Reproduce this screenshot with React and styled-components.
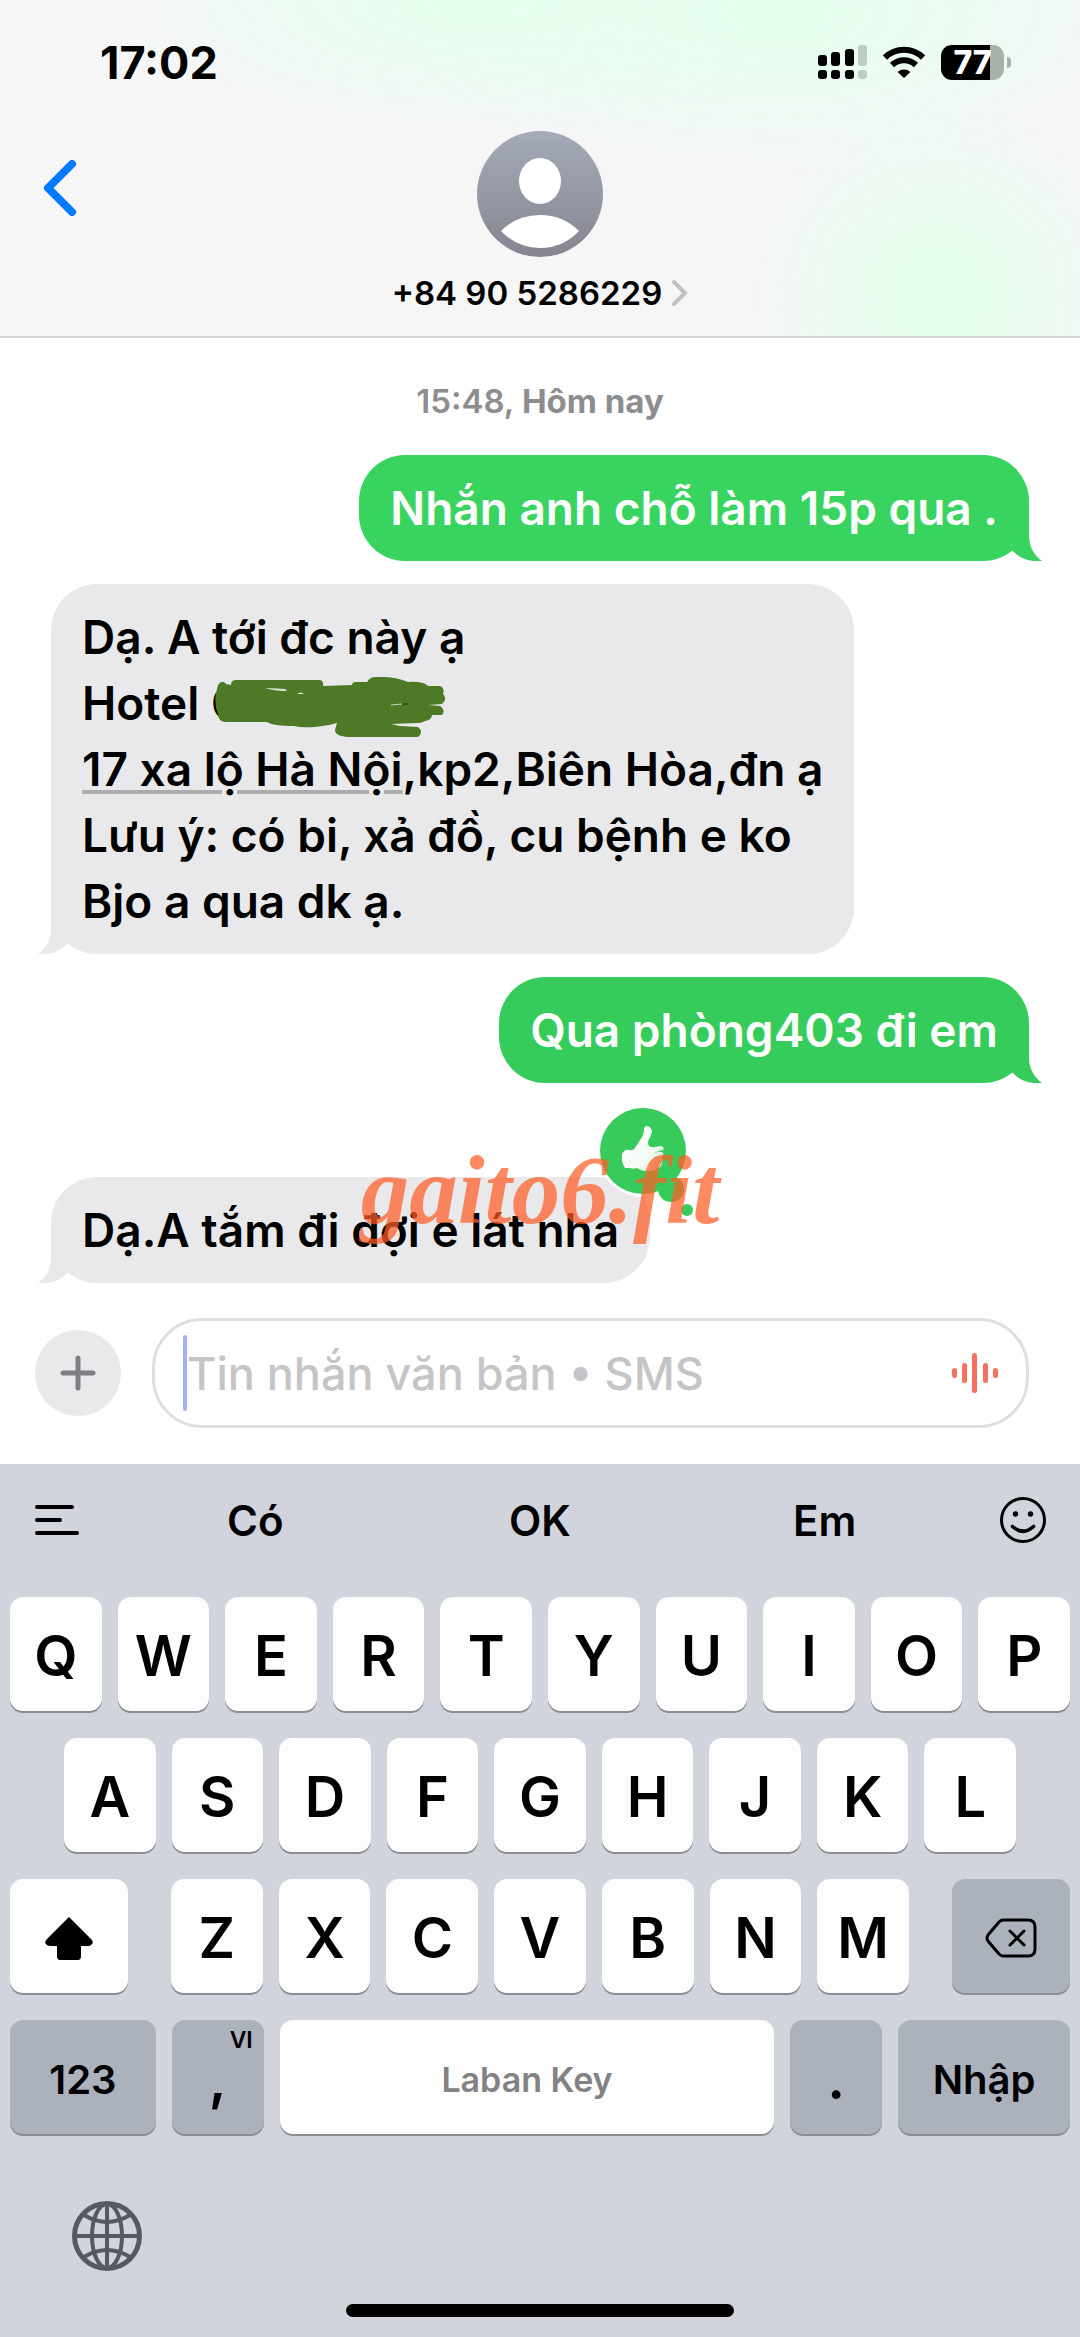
import { styled, createGlobalStyle, css } from 'styled-components';

const TOP_ROW = ['Q', 'W', 'E', 'R', 'T', 'Y', 'U', 'I', 'O', 'P'];
const HOME_ROW = ['A', 'S', 'D', 'F', 'G', 'H', 'J', 'K', 'L'];
const BOTTOM_ROW = ['Z', 'X', 'C', 'V', 'B', 'N', 'M'];
const SUGGESTIONS = ['Có', 'OK', 'Em'];

const SignalIcon = () => (
  <svg width='49' height='34' viewBox='0 0 49 34' aria-hidden='true'>
    <rect x='0' y='10' width='9' height='11' rx='3' />
    <rect x='13' y='7' width='9' height='14' rx='3' />
    <rect x='27' y='4' width='9' height='17' rx='3' />
    <rect x='0' y='25' width='9' height='9' rx='3' />
    <rect x='13' y='25' width='9' height='9' rx='3' />
    <rect x='27' y='25' width='9' height='9' rx='3' />
    <g fill='#bccdc3'>
      <rect x='40' y='0' width='9' height='21' rx='3' />
      <rect x='40' y='25' width='9' height='9' rx='3' />
    </g>
  </svg>
);

const WifiIcon = () => (
  <svg width='42' height='34' viewBox='0 0 42 34' aria-hidden='true'>
    <g fill='none' stroke='#000' strokeWidth='6'>
      <path d='M2 12.5 A27 27 0 0 1 40 12.5' />
      <path d='M9 20 A17.5 17.5 0 0 1 33 20' />
    </g>
    <path d='M21 33 L14.6 27 A9.5 9.5 0 0 1 27.4 27 Z' />
  </svg>
);

const Tail = () => (
  <TailSvg width='44' height='50' viewBox='0 0 44 50' aria-hidden='true'>
    <path d='M31 0 V24 C31 36 36 44 44 50 C32 51 22 48 15 40 L0 30 V0 Z' />
  </TailSvg>
);

const Scribble = () => (
  <ScribbleSvg width='236' height='61' viewBox='0 0 236 61' aria-hidden='true'>
    <path
      fill='#4e7a28'
      d='M5 16 L7 8 Q11 2 15 7 L20 8 Q20 3 25 3 H74 L109 3 Q113 4 112 9 L141 8 Q141 5 145 5 L156 5 Q159 0 164 0 Q182 -1 197 5 Q212 4 217 9 L229 9 Q234 11 232 17 Q237 22 231 27 L217 28 L229 29 Q235 33 231 38 L221 38 Q221 43 214 44 Q211 46 207 46 L180 47 L189 49 L207 50 Q213 55 207 60 H140 Q124 60 124 53 L126 46 L118 48 Q95 52 83 49 Q62 49 56 45 H14 Q7 44 7 37 Q3 28 5 16 Z'
    />
    <path fill='#e3e8dd' d='M54 11 L74 12 L76 14 Q63 14 54 11 Z M86 17 Q90 14 93 17 Z' />
    <path stroke='#c9d3bf' d='M180 28 L191 27' />
    <path stroke='#1a2a0c' d='M191 27 L197 27' />
  </ScribbleSvg>
);

const ThumbReaction = () => (
  <ReactionSvg width='100' height='112' viewBox='-4 -4 100 112' role='img' aria-label='Thích'>
    <defs>
      <linearGradient id='thumbFill' x1='0' y1='0' x2='1' y2='1'>
        <stop offset='0' stopColor='#ffffff' />
        <stop offset='0.65' stopColor='#f3fbf4' />
        <stop offset='1' stopColor='#bfe6c6' />
      </linearGradient>
    </defs>
    <circle cx='43' cy='43' r='46' fill='#fff' />
    <g fill='#36cb5b'>
      <circle cx='43' cy='43' r='43' />
      <circle cx='71' cy='81' r='13' />
      <circle cx='87' cy='102' r='6' />
    </g>
    <path
      fill='url(#thumbFill)'
      d='M46 18 Q51 18 52 23 Q51 28 49 31 Q47 35 49 38 Q52 40 55 39 L61 38 Q65 39 63 42 L57 44 L62 44 Q65 46 62 49 Q64 52 62 54 Q62 58 59 60 Q53 64 47 63 Q41 63 37 60 Q32 61 30 60 L25 60 Q21 54 22 46 Q25 41 29 42 Q33 43 35 40 L42 29 Q44 26 44 20 Z'
    />
    <path fill='none' stroke='#9ad6a6' d='M55 45 L61 42 M54 50 L62 48 M54 55 L61 53' />
  </ReactionSvg>
);

const Key = ({ children, ...rest }) => (
  <KeyButton type='button' {...rest}>
    {children}
  </KeyButton>
);

const App = () => {
  return (
    <>
      <GlobalStyle />
      <Screen>
        <Header>
          <StatusBar>
            <Clock>17:02</Clock>
            <StatusIcons>
              <SignalIcon />
              <WifiIcon />
              <Battery>
                <BatteryBody>77</BatteryBody>
                <BatteryNub />
              </Battery>
            </StatusIcons>
          </StatusBar>
          <NavBar>
            <BackButton type='button' aria-label='Quay lại'>
              <svg width='34' height='56' viewBox='0 0 34 56' fill='none'>
                <path
                  d='M29 4 L5 28 L29 52'
                  stroke='#007aff'
                  strokeWidth='8'
                  strokeLinecap='round'
                  strokeLinejoin='round'
                />
              </svg>
            </BackButton>
            <Contact type='button'>
              <svg width='126' height='126' viewBox='0 0 126 126' aria-hidden='true'>
                <defs>
                  <linearGradient id='avatarFill' x1='0' y1='0' x2='0' y2='1'>
                    <stop offset='0' stopColor='#a5abb9' />
                    <stop offset='1' stopColor='#858590' />
                  </linearGradient>
                </defs>
                <circle cx='63' cy='63' r='63' fill='url(#avatarFill)' />
                <ellipse cx='63' cy='50' rx='21' ry='23' fill='#fff' />
                <path d='M24 100 Q40 84 63 84 Q86 84 102 100 Q86 117 63 117 Q40 117 24 100 Z' fill='#fff' />
              </svg>
              <ContactName>
                +84 90 5286229
                <svg width='16' height='26' viewBox='0 0 16 26' fill='none' aria-hidden='true'>
                  <path d='M2 2 L13 13 L2 24' stroke='#c1c1c4' strokeWidth='4' strokeLinecap='round' />
                </svg>
              </ContactName>
            </Contact>
          </NavBar>
        </Header>

        <Thread>
          <DateLabel>
            15:48, <strong>Hôm nay</strong>
          </DateLabel>
          <Bubble $sent $color='#39d460'>
            Nhắn anh chỗ làm 15p qua .
            <Tail />
          </Bubble>
          <Bubble>
            Dạ. A tới đc này ạ
            <br />
            Hotel{' '}
            <Redacted>
              C
              <Scribble />
            </Redacted>
            <br />
            <AddressLink href='#map'>17 xa lộ Hà Nội</AddressLink>,kp2,Biên Hòa,đn ạ
            <br />
            Lưu ý: có bi, xả đồ, cu bệnh e ko
            <br />
            Bjo a qua dk ạ.
            <Tail />
          </Bubble>
          <Bubble $sent $color='#36cc5b'>
            Qua phòng403 đi em
            <Tail />
          </Bubble>
          <Bubble $reacted>
            Dạ.A tắm đi đợi e lát nha
            <Tail />
            <ThumbReaction />
          </Bubble>
          <Watermark>gaito6.fit</Watermark>
        </Thread>

        <Composer>
          <PlusButton type='button' aria-label='Thêm'>
            <svg width='36' height='36' viewBox='0 0 36 36' aria-hidden='true'>
              <path d='M18 3 V33 M3 18 H33' stroke='#7d7e81' strokeWidth='5' strokeLinecap='round' />
            </svg>
          </PlusButton>
          <Field>
            <Caret />
            <MessageInput type='text' aria-label='Tin nhắn' placeholder='Tin nhắn văn bản • SMS' />
            <VoiceButton type='button' aria-label='Ghi âm'>
              <svg width='46' height='42' viewBox='0 0 46 42' aria-hidden='true'>
                <g fill='#f5715f'>
                  <rect x='0' y='16' width='5' height='10' rx='2.5' />
                  <rect x='10' y='11' width='5' height='20' rx='2.5' />
                  <rect x='20' y='1' width='5' height='40' rx='2.5' />
                  <rect x='31' y='11' width='5' height='20' rx='2.5' />
                  <rect x='41' y='16' width='5' height='10' rx='2.5' />
                </g>
              </svg>
            </VoiceButton>
          </Field>
        </Composer>

        <Keyboard>
          <SuggestionBar>
            <BarButton type='button' aria-label='Menu'>
              <svg width='44' height='30' viewBox='0 0 44 30' aria-hidden='true'>
                <path
                  d='M2 2 H37 M2 15 H25 M2 28 H42'
                  stroke='#000'
                  strokeWidth='4'
                  strokeLinecap='round'
                />
              </svg>
            </BarButton>
            {SUGGESTIONS.map((word) => (
              <BarButton type='button' key={word}>
                {word}
              </BarButton>
            ))}
            <BarButton type='button' aria-label='Biểu tượng cảm xúc'>
              <svg width='46' height='46' viewBox='0 0 46 46' fill='none' aria-hidden='true'>
                <circle cx='23' cy='23' r='21.5' stroke='#000' strokeWidth='3' />
                <circle cx='15.5' cy='17' r='2.7' fill='#000' />
                <circle cx='30.5' cy='17' r='2.7' fill='#000' />
                <path d='M12.5 29.5 Q23 39 33.5 29.5' stroke='#000' strokeWidth='3.6' strokeLinecap='round' />
              </svg>
            </BarButton>
          </SuggestionBar>

          <Keys>
            <KeyRow>
              {TOP_ROW.map((letter) => (
                <Key key={letter}>{letter}</Key>
              ))}
            </KeyRow>
            <KeyRow $inset>
              {HOME_ROW.map((letter) => (
                <Key key={letter}>{letter}</Key>
              ))}
            </KeyRow>
            <ShiftRow>
              <Key aria-label='Shift'>
                <svg width='48' height='43' viewBox='0 0 48 43' aria-hidden='true'>
                  <path d='M24 0 L46 22 Q49 25 47 27 Q46 29 43 29 H36 V39 Q36 43 33 43 H15 Q12 43 12 39 V29 H5 Q2 29 1 27 Q-1 25 2 22 Z' />
                </svg>
              </Key>
              <KeyRow>
                {BOTTOM_ROW.map((letter) => (
                  <Key key={letter}>{letter}</Key>
                ))}
              </KeyRow>
              <Key $dark aria-label='Xóa'>
                <svg width='52' height='40' viewBox='0 0 52 40' fill='none' stroke='#000' aria-hidden='true'>
                  <path
                    d='M18 2 H43 Q50 2 50 9 V31 Q50 38 43 38 H18 Q16 38 14 36 L3 23 Q1 20 3 17 L14 4 Q16 2 18 2 Z'
                    strokeWidth='3'
                  />
                  <path d='M25 13 L39 27 M39 13 L25 27' strokeWidth='3' strokeLinecap='round' />
                </svg>
              </Key>
            </ShiftRow>
            <SpaceRow>
              <Key $dark $size={40}>
                123
              </Key>
              <Key $dark>
                ,<KeyHint>VI</KeyHint>
              </Key>
              <Key $size={34} $muted>
                Laban Key
              </Key>
              <Key $dark>.</Key>
              <Key $dark $size={40}>
                Nhập
              </Key>
            </SpaceRow>
          </Keys>

          <GlobeButton type='button' aria-label='Đổi bàn phím'>
            <svg width='70' height='70' viewBox='0 0 70 70' fill='none' stroke='#555a61' aria-hidden='true'>
              <circle cx='35' cy='35' r='32.5' strokeWidth='5' />
              <ellipse cx='35' cy='35' rx='15' ry='32' strokeWidth='4' />
              <path d='M35 2 V68 M2 35 H68' strokeWidth='4' />
              <path d='M12 14 Q35 28 58 14 M12 56 Q35 42 58 56' strokeWidth='4' />
            </svg>
          </GlobeButton>
          <HomeIndicator />
        </Keyboard>
      </Screen>
    </>
  );
};

export default App;

const GlobalStyle = createGlobalStyle`
  * {
    box-sizing: border-box;
  }

  body {
    margin: 0;
    background: #fff;
    color: #000;
    font-family: Inter, 'Noto Sans', sans-serif;
    font-weight: 600;
  }

  button {
    margin: 0;
    padding: 0;
    border: none;
    background: none;
    color: inherit;
    font: inherit;
    cursor: pointer;
  }

  svg {
    display: block;
    flex-shrink: 0;
  }
`;

const Screen = styled.div`
  display: flex;
  flex-direction: column;
  min-height: 100vh;
`;

const Header = styled.header`
  border-bottom: 2px solid #d3d5d5;
  background:
    radial-gradient(ellipse 34% 40% at 44% 0%, #e5ffee 10%, rgb(229 255 238 / 0%) 100%),
    radial-gradient(ellipse 36% 48% at 72% 4%, #e5ffee 10%, rgb(229 255 238 / 0%) 100%),
    radial-gradient(ellipse 18% 58% at 87% 88%, #e4ffec 15%, rgb(228 255 236 / 0%) 100%),
    #f6f6f7;
`;

const StatusBar = styled.div`
  display: flex;
  align-items: center;
  justify-content: space-between;
  height: 124px;
  padding: 0 69px 0 100px;
`;

const Clock = styled.time`
  font-size: 45px;
  font-weight: 700;
`;

const StatusIcons = styled.div`
  display: flex;
  align-items: center;
  gap: 16px;
`;

const Battery = styled.div`
  display: flex;
  align-items: center;
  gap: 3px;
`;

const BatteryBody = styled.span`
  width: 63px;
  height: 35px;
  border-radius: 11px;
  background: linear-gradient(to right, #000 77%, #a7b2aa 77%);
  color: #fff;
  font-size: 32px;
  font-weight: 800;
  line-height: 35px;
  text-align: center;
`;

const BatteryNub = styled.span`
  width: 4px;
  height: 11px;
  border-radius: 0 4px 4px 0;
  background: #a7b2aa;
`;

const NavBar = styled.nav`
  display: grid;
  grid-template-columns: 1fr auto 1fr;
  align-items: start;
  padding: 7px 43px 23px;
`;

const BackButton = styled.button`
  display: flex;
  align-items: center;
  justify-self: start;
  height: 114px;
`;

const Contact = styled.button`
  display: flex;
  flex-direction: column;
  align-items: center;
  gap: 16px;
`;

const ContactName = styled.span`
  display: flex;
  align-items: center;
  gap: 10px;
  font-size: 33px;
  line-height: 40px;
`;

const Thread = styled.main`
  position: relative;
  display: flex;
  flex: 1;
  flex-direction: column;
  align-items: flex-start;
  gap: 23px;
  padding: 43px 51px 0;
`;

const DateLabel = styled.p`
  align-self: center;
  margin: 0 0 11px;
  color: #8d8d90;
  font-size: 33px;
  line-height: 40px;

  strong {
    font-weight: 700;
  }
`;

const TailSvg = styled.svg`
  position: absolute;
  right: -13px;
  bottom: 0;
`;

const Bubble = styled.div`
  position: relative;
  padding: 20px 31px;
  border-radius: 46px;
  background: #e9e9eb;
  font-size: 46px;
  line-height: 66px;

  ${TailSvg} {
    right: auto;
    left: -13px;
    fill: #e9e9eb;
    transform: scaleX(-1);
  }

  ${({ $sent, $color }) =>
    $sent &&
    css`
      align-self: flex-end;
      background: ${$color};
      color: #fff;

      ${TailSvg} {
        right: -13px;
        left: auto;
        fill: ${$color};
        transform: none;
      }
    `}

  ${({ $reacted }) => $reacted && 'margin-top: 71px;'}
`;

const Redacted = styled.span`
  position: relative;
  display: inline-block;
`;

const ScribbleSvg = styled.svg`
  position: absolute;
  top: 7px;
  left: 0;
`;

const AddressLink = styled.a`
  color: inherit;
  text-decoration: underline;
  text-decoration-color: #acacae;
  text-decoration-thickness: 4px;
  text-underline-offset: 4px;
`;

const ReactionSvg = styled.svg`
  position: absolute;
  top: -73px;
  right: -46px;
`;

const Watermark = styled.div`
  position: absolute;
  right: 0;
  bottom: 44px;
  left: 0;
  color: rgb(255 92 36 / 72%);
  font-family: 'Liberation Serif', serif;
  font-size: 97px;
  font-style: italic;
  font-weight: 700;
  line-height: 97px;
  text-align: center;
  pointer-events: none;
`;

const Composer = styled.form`
  display: flex;
  align-items: center;
  gap: 31px;
  padding: 35px 51px 36px 35px;
`;

const PlusButton = styled.button`
  display: flex;
  align-items: center;
  justify-content: center;
  width: 86px;
  height: 86px;
  border-radius: 50%;
  background: #e8e9eb;
`;

const Field = styled.div`
  display: flex;
  flex: 1;
  align-items: center;
  height: 110px;
  padding: 0 28px;
  border: 3px solid #dfdfe1;
  border-radius: 50px;
`;

const Caret = styled.span`
  width: 4px;
  height: 76px;
  border-radius: 2px;
  background: #a3b1f7;
`;

const MessageInput = styled.input`
  flex: 1;
  min-width: 0;
  padding: 0;
  border: none;
  outline: none;
  background: none;
  color: #000;
  font: inherit;
  font-size: 45px;
  font-weight: 500;

  &::placeholder {
    color: #c5c5c7;
    opacity: 1;
  }
`;

const VoiceButton = styled.button`
  display: flex;
`;

const Keyboard = styled.section`
  display: flex;
  flex-direction: column;
  padding-bottom: 20px;
  background: #d1d4dc;
`;

const SuggestionBar = styled.div`
  display: grid;
  grid-template-columns: 113px 1fr 1fr 1fr 113px;
  height: 112px;
`;

const BarButton = styled.button`
  display: flex;
  align-items: center;
  justify-content: center;
  font-size: 42px;
`;

const Keys = styled.div`
  display: flex;
  flex-direction: column;
  gap: 27px;
  padding: 21px 10px 0;
`;

const KeyRow = styled.div`
  display: grid;
  grid-auto-columns: minmax(0, 1fr);
  grid-auto-flow: column;
  gap: 16px;
  padding: 0 ${({ $inset }) => ($inset ? '54px' : '0')};
`;

const ShiftRow = styled.div`
  display: grid;
  grid-template-columns: 118fr 738fr 118fr;
  gap: 43px;
`;

const SpaceRow = styled.div`
  display: grid;
  grid-template-columns: 146fr 92fr 495fr 92fr 172fr;
  gap: 16px;
`;

const KeyButton = styled.button`
  position: relative;
  display: flex;
  align-items: center;
  justify-content: center;
  height: 114px;
  padding-top: 4px;
  border-radius: 13px;
  background: ${({ $dark }) => ($dark ? '#abb2bc' : '#fdfdfe')};
  box-shadow: 0 2px 0 #8b8d92;
  color: ${({ $muted }) => ($muted ? '#828284' : '#000')};
  font-size: ${({ $size }) => $size || 56}px;
`;

const KeyHint = styled.span`
  position: absolute;
  top: 6px;
  right: 11px;
  font-size: 23px;
  line-height: 28px;
`;

const GlobeButton = styled.button`
  align-self: flex-start;
  margin: 67px 0 33px 72px;
`;

const HomeIndicator = styled.div`
  align-self: center;
  width: 36%;
  height: 13px;
  border-radius: 7px;
  background: #000;
`;
